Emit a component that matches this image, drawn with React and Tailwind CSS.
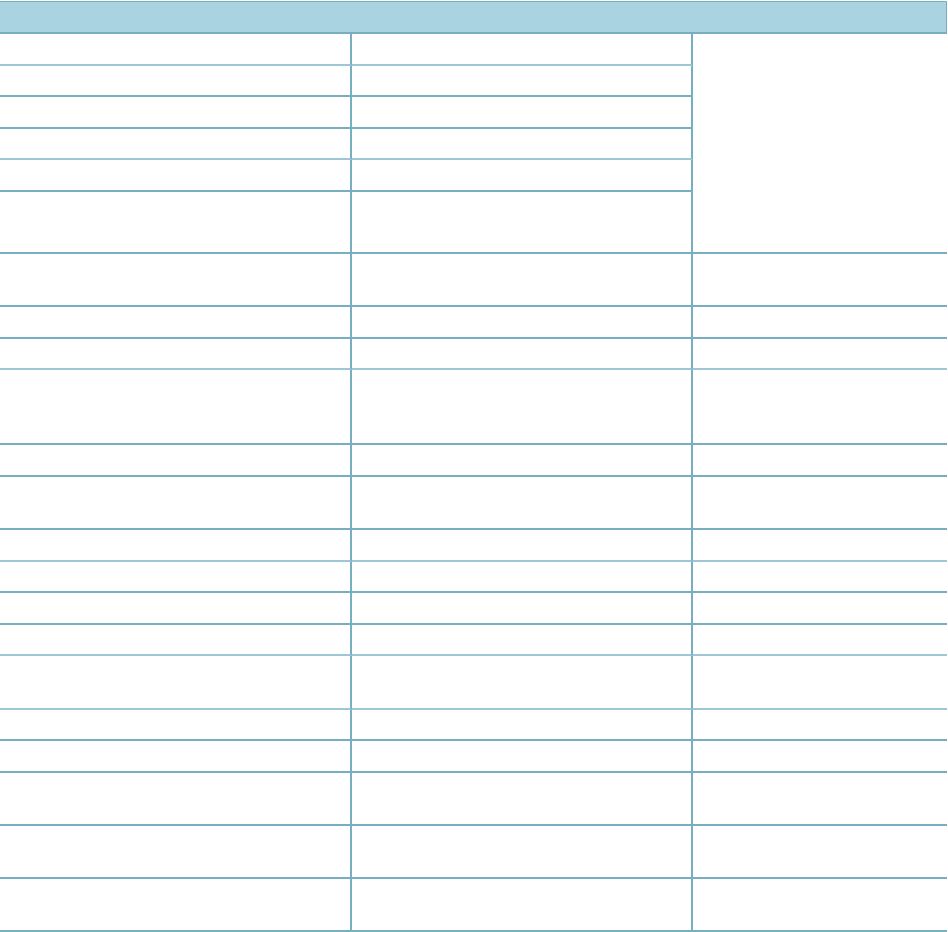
const dark = 'border-[#77afc1]';

// rows below the header; h = row height incl. the 2px bottom rule, soft = lighter rule
const rows = [
  { h: 'h-[32px]', soft: true },
  { h: 'h-[31px]' },
  { h: 'h-[32px]' },
  { h: 'h-[31px]', soft: true },
  { h: 'h-[32px]' },
  { h: 'h-[62px]' },
  { h: 'h-[53px]' },
  { h: 'h-[32px]' },
  { h: 'h-[31px]', soft: true },
  { h: 'h-[75px]' },
  { h: 'h-[32px]' },
  { h: 'h-[53px]' },
  { h: 'h-[32px]', soft: true },
  { h: 'h-[31px]' },
  { h: 'h-[32px]' },
  { h: 'h-[31px]', soft: true },
  { h: 'h-[54px]', soft: true },
  { h: 'h-[31px]' },
  { h: 'h-[32px]' },
  { h: 'h-[53px]' },
  { h: 'h-[53px]' },
  { h: 'h-[53px]' },
];

function Cell({ h, soft, last }) {
  return (
    <div
      className={`${h} ${dark} border-b-2 ${last ? '' : 'border-r-2'} ${
        soft ? 'border-b-[#9dc7d4]' : ''
      }`}
    />
  );
}

export default function App() {
  return (
    <div className="min-h-screen bg-white pt-px">
      <div className="grid w-[947px] grid-cols-[352px_341px_254px]">
        <div className={`col-span-3 h-[33px] border-t border-r border-b-2 ${dark} bg-[#a9d3e0]`} />

        {rows.map((row, i) => (
          <div key={i} className="contents">
            <Cell h={row.h} soft={row.soft} />
            <Cell h={row.h} soft={row.soft} />
            {i === 0 && <div className={`row-span-6 border-b-2 ${dark}`} />}
            {i >= 6 && <Cell h={row.h} soft={row.soft} last />}
          </div>
        ))}
      </div>
    </div>
  );
}
